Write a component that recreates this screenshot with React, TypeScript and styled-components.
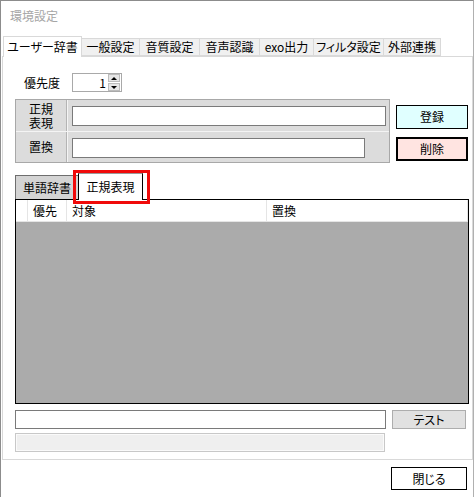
import React from 'react'
import styled, { createGlobalStyle } from 'styled-components'

const GlobalStyle = createGlobalStyle`
  html, body {
    margin: 0;
    padding: 0;
    background: #fff;
  }
  body {
    font-family: "Noto Sans CJK JP", "Noto Sans", sans-serif;
    font-size: 12px;
    font-feature-settings: "palt";
    color: #000;
  }
  * { box-sizing: border-box; }
`

const Window = styled.div`
  width: 474px;
  height: 497px;
  border-left: 1px solid #8c8c8c;
  border-top: 1px solid #8c8c8c;
  border-right: 1px solid #b0b0b0;
  display: flex;
  flex-direction: column;
  background: #fff;
`

const TitleBar = styled.div`
  height: 35px;
  padding: 7px 0 0 9px;
  line-height: 16px;
  color: #a6a6a6;
`

const TabRow = styled.div`
  display: flex;
  align-items: flex-end;
  height: 20px;
  margin-left: 1px;
  padding-left: 1px;
`

const Tab = styled.div<{ $w: number; $active?: boolean }>`
  width: ${p => p.$w}px;
  height: ${p => (p.$active ? 21 : 18)}px;
  margin-bottom: ${p => (p.$active ? -1 : 0)}px;
  position: relative;
  z-index: ${p => (p.$active ? 2 : 1)};
  border: 1px solid #d9d9d9;
  border-bottom: ${p => (p.$active ? 'none' : '1px solid #d9d9d9')};
  margin-left: -1px;
  background: ${p => (p.$active ? '#fff' : '#f0f0f0')};
  display: flex;
  align-items: center;
  justify-content: center;
  line-height: 14px;
  padding-bottom: ${p => (p.$active ? 1 : 0)}px;
  white-space: nowrap;
  &:first-child { margin-left: 0; }
`

const Panel = styled.div`
  margin-left: 1px;
  width: 471px;
  height: 404px;
  border: 1px solid #d9d9d9;
  background: #fff;
  display: flex;
  flex-direction: column;
  padding-left: 12px;
`

const PriorityRow = styled.div`
  margin-top: 16px;
  padding-left: 9px;
  height: 19px;
  display: flex;
  align-items: center;
`

const FieldLabel = styled.span`
  width: 48px;
  line-height: 14px;
`

const Spinner = styled.div`
  width: 50px;
  height: 19px;
  border: 1px solid #a9a9a9;
  display: flex;
  align-items: stretch;
  background: #fff;
`

const SpinValue = styled.div`
  flex: 1;
  text-align: right;
  line-height: 17px;
  padding-right: 2px;
`

const SpinButtons = styled.div`
  width: 13px;
  display: flex;
  flex-direction: column;
  gap: 1px;
  padding: 0 1px 0 0;
`

const SpinArrow = styled.div<{ $down?: boolean }>`
  flex: 1;
  background: #e6e6e6;
  border: 1px solid #bcbcbc;
  display: flex;
  align-items: center;
  justify-content: center;
  &::after {
    content: '';
    width: 0;
    height: 0;
    border-left: 3px solid transparent;
    border-right: 3px solid transparent;
    ${p => (p.$down ? 'border-top: 3px solid #000;' : 'border-bottom: 3px solid #000;')}
  }
`

const EditRow = styled.div`
  margin-top: 7px;
  display: flex;
  gap: 6px;
`

const EditGrid = styled.div`
  width: 375px;
  height: 64px;
  display: grid;
  grid-template-columns: 51px 1fr;
  grid-template-rows: 31px 30px;
  gap: 1px;
  border: 1px solid #a8a8a8;
  background: #f4f4f4;
`

const LabelCell = styled.div`
  background: #dcdcdc;
  border-right: 1px solid #b4b4b4;
  display: flex;
  align-items: center;
  justify-content: center;
  text-align: center;
  line-height: 14px;
`

const InputCell = styled.div`
  background: #dcdcdc;
  padding: 6px 0 0 4px;
`

const TextBox = styled.div<{ $w: number; $h?: number }>`
  width: ${p => p.$w}px;
  height: ${p => p.$h ?? 20}px;
  border: 1px solid #7a7a7a;
  background: #fff;
`

const ButtonColumn = styled.div`
  padding-top: 6px;
  display: flex;
  flex-direction: column;
  gap: 8px;
`

const ColorButton = styled.div<{ $bg: string; $thick?: boolean }>`
  width: 72px;
  height: 24px;
  background: ${p => p.$bg};
  border: ${p => (p.$thick ? 2 : 1)}px solid #000;
  display: flex;
  align-items: center;
  justify-content: center;
  line-height: 14px;
`

const SubTabRow = styled.div`
  margin-top: 10px;
  height: 26px;
  display: flex;
  align-items: flex-end;
  position: relative;
  z-index: 1;
`

const SubTab = styled.div<{ $w: number; $active?: boolean }>`
  position: relative;
  width: ${p => p.$w}px;
  height: ${p => (p.$active ? 27 : 24)}px;
  margin-bottom: ${p => (p.$active ? -1 : 0)}px;
  background: ${p => (p.$active ? '#fff' : '#d4d4d4')};
  border-top: 1px solid ${p => (p.$active ? '#9a9a9a' : '#6e6e6e')};
  border-left: 1px solid ${p => (p.$active ? '#000' : '#6e6e6e')};
  border-right: ${p => (p.$active ? '1px solid #000' : 'none')};
  display: flex;
  align-items: center;
  justify-content: center;
  line-height: 14px;
  padding-bottom: ${p => (p.$active ? 1 : 0)}px;
`

const Highlight = styled.div`
  position: absolute;
  left: -6px;
  top: -4px;
  right: -8px;
  bottom: -4px;
  border: 3px solid #f00a0a;
  pointer-events: none;
`

const ListView = styled.div`
  width: 454px;
  height: 205px;
  border: 1px solid #000;
  background: #ababab;
  display: flex;
  flex-direction: column;
`

const HeaderRow = styled.div`
  height: 22px;
  background: #fff;
  display: flex;
  border-bottom: 1px solid #e5e5e5;
`

const HeaderCell = styled.div<{ $w?: number }>`
  ${p => (p.$w ? `width: ${p.$w}px;` : 'flex: 1;')}
  border-right: 1px solid #e5e5e5;
  padding-left: 5px;
  line-height: 21px;
`

const TestRow = styled.div`
  margin-top: 6px;
  display: flex;
  gap: 6px;
`

const GrayButton = styled.div`
  width: 74px;
  height: 19px;
  background: #e1e1e1;
  border: 1px solid #adadad;
  display: flex;
  align-items: center;
  justify-content: center;
  line-height: 14px;
`

const Progress = styled.div`
  margin-top: 4px;
  width: 370px;
  height: 19px;
  border: 1px solid #c8c8c8;
  box-shadow: inset 0 0 0 1px #fafafa;
  background: #efefef;
`

const Footer = styled.div`
  flex: 1;
  display: flex;
  justify-content: flex-end;
  padding: 7px 6px 0 0;
`

const CloseButton = styled.div`
  width: 76px;
  height: 23px;
  border: 1px solid #000;
  background: #fff;
  display: flex;
  align-items: center;
  justify-content: center;
  line-height: 14px;
`

const mainTabs: { label: string; w: number; active?: boolean }[] = [
  { label: 'ユーザー辞書', w: 79, active: true },
  { label: '一般設定', w: 59 },
  { label: '音質設定', w: 61 },
  { label: '音声認識', w: 61 },
  { label: 'exo出力', w: 55 },
  { label: 'フィルタ設定', w: 71 },
  { label: '外部連携', w: 58 },
]

export default function App() {
  return (
    <>
      <GlobalStyle />
      <Window>
        <TitleBar>環境設定</TitleBar>
        <TabRow>
          {mainTabs.map(t => (
            <Tab key={t.label} $w={t.w} $active={t.active}>{t.label}</Tab>
          ))}
        </TabRow>
        <Panel>
          <PriorityRow>
            <FieldLabel>優先度</FieldLabel>
            <Spinner>
              <SpinValue>1</SpinValue>
              <SpinButtons>
                <SpinArrow />
                <SpinArrow $down />
              </SpinButtons>
            </Spinner>
          </PriorityRow>

          <EditRow>
            <EditGrid>
              <LabelCell>正規<br />表現</LabelCell>
              <InputCell><TextBox $w={314} /></InputCell>
              <LabelCell>置換</LabelCell>
              <InputCell><TextBox $w={293} /></InputCell>
            </EditGrid>
            <ButtonColumn>
              <ColorButton $bg="#e0ffff">登録</ColorButton>
              <ColorButton $bg="#ffe4e1" $thick>削除</ColorButton>
            </ButtonColumn>
          </EditRow>

          <SubTabRow>
            <SubTab $w={63}>単語辞書</SubTab>
            <SubTab $w={65} $active>
              正規表現
              <Highlight />
            </SubTab>
          </SubTabRow>
          <ListView>
            <HeaderRow>
              <HeaderCell $w={12} />
              <HeaderCell $w={39}>優先</HeaderCell>
              <HeaderCell $w={200}>対象</HeaderCell>
              <HeaderCell>置換</HeaderCell>
            </HeaderRow>
          </ListView>

          <TestRow>
            <TextBox $w={371} $h={19} />
            <GrayButton>テスト</GrayButton>
          </TestRow>
          <Progress />
        </Panel>
        <Footer>
          <CloseButton>閉じる</CloseButton>
        </Footer>
      </Window>
    </>
  )
}
